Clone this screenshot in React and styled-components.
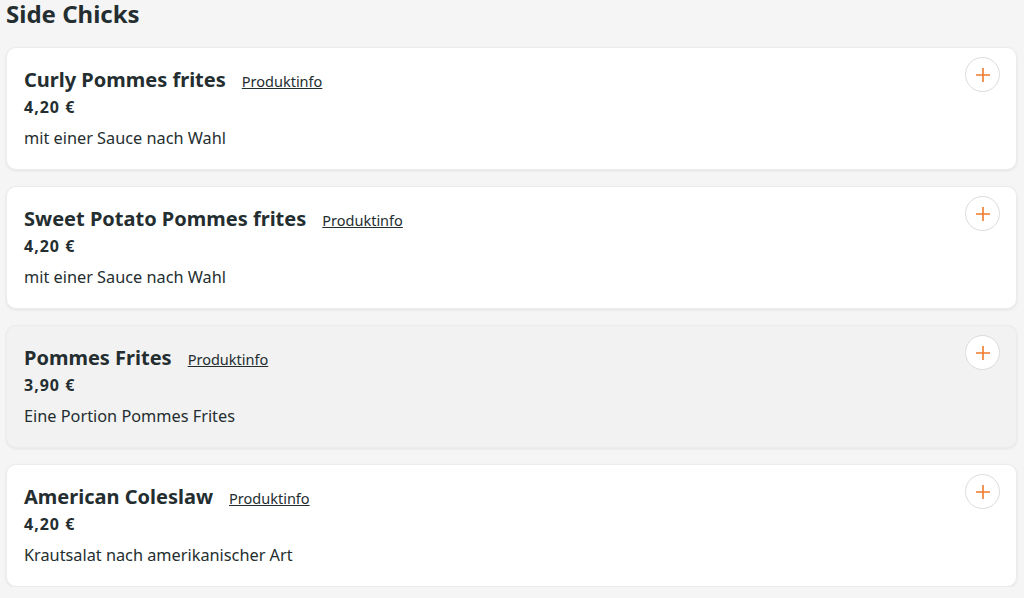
import styled, { createGlobalStyle } from "styled-components";

const Global = createGlobalStyle`
  body{
    margin: 0;
    background: #f5f5f5;
    font-family: "Noto Sans", "Liberation Sans", sans-serif;
    color: #242e30;
  }
`;

const items = [
  { name: "Curly Pommes frites", price: "4,20 €", desc: "mit einer Sauce nach Wahl" },
  { name: "Sweet Potato Pommes frites", price: "4,20 €", desc: "mit einer Sauce nach Wahl" },
  { name: "Pommes Frites", price: "3,90 €", desc: "Eine Portion Pommes Frites", hover: true },
  { name: "American Coleslaw", price: "4,20 €", desc: "Krautsalat nach amerikanischer Art" },
];

export default function App() {
  return (
    <>
      <Global />
      <Page>
        <Heading>Side Chicks</Heading>
        <List>
          {items.map((it) => (
            <Card key={it.name} $hover={it.hover}>
              <Info>
                <TitleRow>
                  <Name>{it.name}</Name>
                  <InfoLink href="#">Produktinfo</InfoLink>
                </TitleRow>
                <Price>{it.price}</Price>
                <Desc>{it.desc}</Desc>
              </Info>
              <AddButton aria-label="hinzufügen">
                <svg width="16" height="16" viewBox="0 0 16 16">
                  <path d="M8 1v14M1 8h14" stroke="#f07a2e" strokeWidth="1.6" fill="none" />
                </svg>
              </AddButton>
            </Card>
          ))}
        </List>
      </Page>
    </>
  );
}

const Page = styled.div`
  padding: 0 7px 0 6px;
`;

const Heading = styled.h2`
  margin: 0;
  padding-top: 1px;
  font-size: 24px;
  line-height: 26px;
  font-weight: 700;
  color: #242e30;
`;

const List = styled.div`
  display: flex;
  flex-direction: column;
  gap: 16px;
  margin-top: 20px;
`;

const Card = styled.div`
  display: flex;
  justify-content: space-between;
  align-items: flex-start;
  height: 123px;
  box-sizing: border-box;
  padding: 9px 17px 0 17px;
  border-radius: 10px;
  background: ${(p) => (p.$hover ? "#f2f2f2" : "#ffffff")};
  border: 1px solid #ececec;
  box-shadow: 0 1px 3px rgba(0, 0, 0, 0.08);
`;

const Info = styled.div`
  display: flex;
  flex-direction: column;
  padding-top: 10px;
`;

const TitleRow = styled.div`
  display: flex;
  align-items: baseline;
  gap: 16px;
`;

const Name = styled.span`
  font-size: 20px;
  font-weight: 700;
  line-height: 26px;
`;

const InfoLink = styled.a`
  font-size: 14.5px;
  color: #242e30;
  text-decoration: underline;
`;

const Price = styled.div`
  font-size: 16px;
  font-weight: 700;
  letter-spacing: 1px;
  line-height: 20px;
  margin-top: 4px;
`;

const Desc = styled.div`
  font-size: 16.3px;
  line-height: 20px;
  margin-top: 11px;
`;

const AddButton = styled.button`
  width: 35px;
  height: 35px;
  border-radius: 50%;
  border: 1px solid #dcdcdc;
  background: #fff;
  display: flex;
  align-items: center;
  justify-content: center;
  padding: 0;
  margin-right: -1px;
  cursor: pointer;
`;
